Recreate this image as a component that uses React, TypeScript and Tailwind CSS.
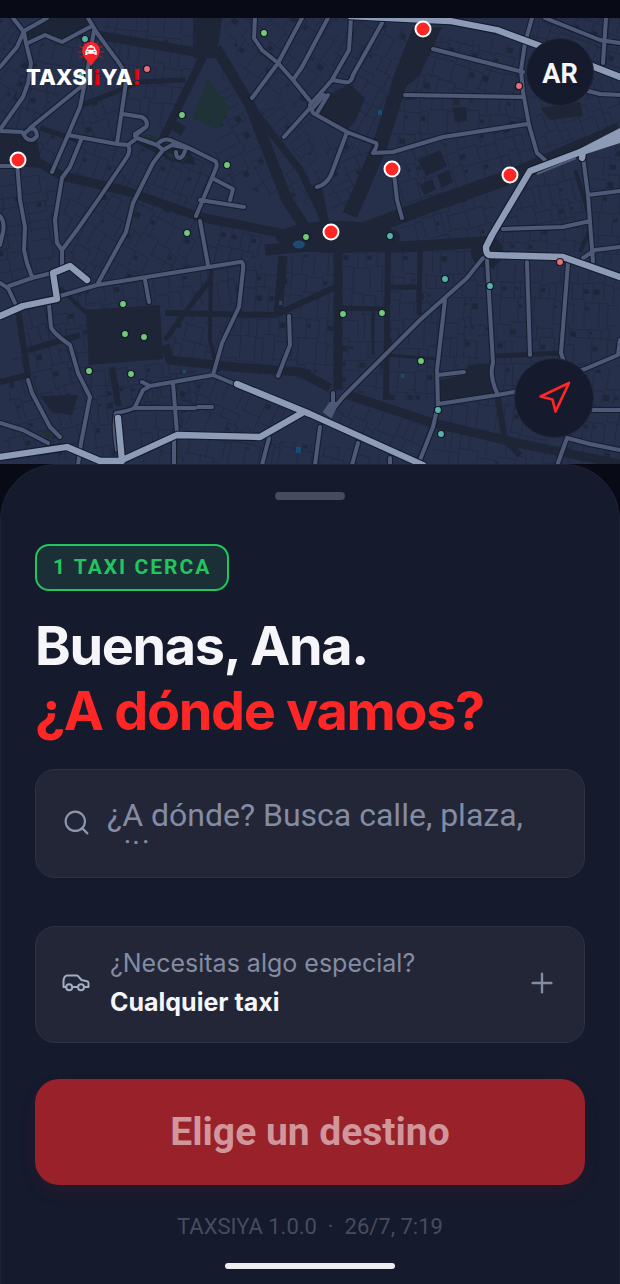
import { Navigation, Plus, Search } from "lucide-react";

type Point = [number, number];

const taxis: Point[] = [
  [423, 29],
  [18, 160],
  [392, 169],
  [510, 175],
  [331, 232],
];

const places: { color: string; points: Point[] }[] = [
  {
    color: "#74c974",
    points: [
      [264, 33], [182, 115], [227, 165], [187, 233], [306, 237], [123, 304], [125, 334],
      [144, 337], [89, 371], [131, 374], [343, 314], [382, 313], [421, 361],
    ],
  },
  {
    color: "#55b5a8",
    points: [[85, 39], [81, 76], [390, 236], [445, 279], [490, 286], [438, 410], [441, 434]],
  },
  { color: "#ea6f74", points: [[147, 69], [519, 86], [560, 262]] },
];

// Blocks of houses: outline and the direction in which their plots run
const blocks: { points: string; angle: number }[] = [
  { points: "0,18 26,30 31,63 23,97 0,130", angle: 35 },
  { points: "28,43 62,42 90,30 88,67 30,128 5,128", angle: 12 },
  { points: "97,38 207,55 167,130 123,112 126,76", angle: 8 },
  { points: "98,18 193,18 193,52 110,35", angle: 4 },
  { points: "222,18 345,18 310,110 252,98", angle: 38 },
  { points: "85,80 120,88 117,143 68,135", angle: -18 },
  { points: "40,128 68,135 52,172 38,165", angle: 22 },
  { points: "81,143 128,147 100,195 62,180", angle: 18 },
  { points: "128,147 163,152 133,200 105,192", angle: 28 },
  { points: "163,150 217,163 196,213 137,195", angle: 22 },
  { points: "222,70 285,200 212,178 218,130", angle: 62 },
  { points: "245,110 310,105 325,215 290,195", angle: 50 },
  { points: "0,168 62,180 57,240 55,270 0,285", angle: 80 },
  { points: "66,183 200,217 205,268 97,285 62,262", angle: 28 },
  { points: "204,222 262,236 260,258 208,262", angle: 12 },
  { points: "348,18 410,30 376,143 312,113", angle: 27 },
  { points: "325,135 375,148 348,215 330,210", angle: 66 },
  { points: "425,35 525,45 521,95 405,100", angle: 14 },
  { points: "400,97 525,97 527,124 383,152", angle: 3 },
  { points: "380,155 530,125 540,160 405,205", angle: -15 },
  { points: "527,75 620,80 620,128 545,158", angle: -20 },
  { points: "533,18 620,18 620,75 530,40", angle: 20 },
  { points: "360,225 500,182 486,247 370,243", angle: -14 },
  { points: "530,178 583,157 590,222 500,230", angle: -12 },
  { points: "590,153 620,145 620,270 593,255", angle: 3 },
  { points: "500,232 590,225 590,252 495,252", angle: 3 },
  { points: "60,290 243,265 239,305 85,312", angle: -9 },
  { points: "20,305 50,305 90,397 80,460 0,460", angle: -14 },
  { points: "52,310 85,312 90,368 125,372 115,460 92,455 90,395", angle: -6 },
  { points: "95,370 165,362 213,375 140,410 112,405", angle: -8 },
  { points: "165,315 237,312 213,375 165,360", angle: 15 },
  { points: "243,266 333,250 333,385 222,370", angle: 4 },
  { points: "135,390 213,378 177,433 125,455", angle: -3 },
  { points: "180,390 213,378 300,412 260,437 180,435", angle: 24 },
  { points: "130,462 177,438 265,440 350,448 400,465", angle: 12 },
  { points: "343,252 383,250 383,390 340,395", angle: 1 },
  { points: "390,250 485,250 385,360", angle: 0 },
  { points: "390,350 443,300 438,400 388,400", angle: 2 },
  { points: "447,290 487,262 493,365 440,375", angle: 4 },
  { points: "491,260 620,278 615,355 500,392", angle: 2 },
  { points: "340,400 430,425 420,465 335,420", angle: 24 },
  { points: "440,405 620,365 620,465 430,465", angle: 8 },
];

const avenues: { d: string; width: number }[] = [
  { d: "M97 35L207 54", width: 9 },
  { d: "M203 57L167 130L160 145", width: 8 },
  { d: "M216 48L250 105L287 200L310 235", width: 11 },
  { d: "M250 105L300 170L322 215", width: 7 },
  { d: "M35 160L62 176L123 190L200 217L280 233L310 236", width: 9 },
  { d: "M40 128L80 141M83 105L140 82L185 80", width: 5 },
  { d: "M350 235L425 207L515 175L620 130", width: 15 },
  { d: "M350 215L380 145L402 75L420 30", width: 15 },
  { d: "M325 225L317 185", width: 9 },
  { d: "M265 250L310 246L400 247L486 242", width: 11 },
  { d: "M338 250L338 390", width: 9 },
  { d: "M388 250L386 400", width: 6 },
  { d: "M420 250L419 315M340 308L386 309M390 287L420 287", width: 5 },
  { d: "M373 308L373 355M386 355L438 359", width: 3 },
  { d: "M283 256L278 312", width: 9 },
  { d: "M211 265L210 340L218 372", width: 4 },
  { d: "M165 313L275 315L338 286", width: 6 },
  { d: "M165 345L170 360L235 367L300 372L330 388", width: 9 },
  { d: "M165 340L187 310L210 280", width: 5 },
  { d: "M345 394L433 423L517 443L620 464", width: 9 },
  { d: "M497 394L505 440L520 455", width: 6 },
  { d: "M18 310L28 375L0 382M28 350L80 335M112 367L118 405", width: 6 },
  { d: "M495 356L560 353", width: 5 },
  { d: "M60 288L85 312L160 307", width: 4 },
  { d: "M580 252L592 225L575 170", width: 4 },
];

const streets: string[] = [
  "M13 18L24 32L26 43L31 63L28 83L23 97L1 128",
  "M47 18L24 31L17 47L0 67",
  "M28 43L45 35L62 42L90 27",
  "M88 18L97 33L113 55Q127 72 126 82L123 103L117 143",
  "M94 30L88 67L80 107L68 135L52 172",
  "M83 85L30 128M0 131L22 132L26 138Q32 143 37 136Q37 129 31 128L25 133",
  "M68 135L117 144L128 145L137 138L157 145L163 150",
  "M123 114L142 117Q149 121 146 127L135 136L137 138M146 127L135 134",
  "M157 145Q162 138 170 140L187 147L215 161Q218 163 216 168L212 178L196 216",
  "M163 150L172 145L187 148M176 152Q176 158 180 158Q183 157 185 151",
  "M212 178L233 189L230 200M200 200L244 207",
  "M81 140L70 167L62 178L55 220L57 243L62 250L77 230M62 250L62 266",
  "M128 145Q131 150 127 157L100 197L77 230",
  "M163 150L153 163L133 203L126 232L97 285",
  "M17 162L20 200L25 227L24 250L27 263L32 277M0 166L17 166",
  "M0 216Q5 222 3 232L0 245",
  "M200 221L204 243L208 265",
  "M255 18L254 38L262 50L278 63L293 80L310 101",
  "M302 18L278 63L252 98M328 18L302 67L293 80",
  "M310 108L284 137",
  "M351 18L349 50L332 80L310 105L313 113L347 132L376 143Q378 145 373 153L393 152L443 137L527 124",
  "M382 23L353 75Q351 84 344 82L332 80M328 95L317 113M324 95L313 108",
  "M347 132L331 175Q326 185 317 187",
  "M394 173L397 200L402 218",
  "M532 18L525 43L521 70L523 92L529 125L537 153L545 160",
  "M433 49L523 72M405 95L523 97",
  "M545 18L600 40L620 43M606 18L603 63M588 91L600 94L620 95",
  "M583 157L588 195L593 262M588 195L620 191M503 229L563 227L590 221",
  "M583 258L595 250L620 247",
  "M60 296L97 285L240 262Q244 261 243 270L239 307L222 343L213 375",
  "M145 280L149 302",
  "M0 283L8 288L15 303M9 286L32 278L52 273",
  "M49 305L51 327Q53 333 70 345L78 373L90 397L81 443L78 465",
  "M28 380L32 393L50 427L60 437M0 423L23 430L48 443",
  "M142 382L150 386L213 375L237 385",
  "M150 386L143 390L135 407Q133 410 116 413Q113 425 117 450",
  "M135 408L195 408M198 407L212 407M173 383L177 433M174 440L174 465",
  "M269 438L262 465M289 316L290 345L278 376",
  "M483 258L467 278L420 320L343 397L330 413M333 393L333 407",
  "M445 300L437 370L438 405L433 427L420 460M438 375L464 372",
  "M438 404L497 395L514 392L585 369L618 355L620 340",
  "M487 260L493 363Q489 375 497 393",
  "M527 262L530 355M568 263L561 353L564 362",
  "M593 410L620 410M558 463L567 438L590 444L620 450",
  "M320 427L315 465M358 443L352 465M390 458L390 465",
];

const mainRoads: string[] = [
  "M350 16L450 21L497 30L543 47L620 77",
  "M625 134L583 151L530 171L492 235L486 247Q486 255 490 255L563 257L620 277",
  "M583 152L582 158",
  "M0 316L23 306L57 299L53 273L70 266L87 280",
  "M0 457L67 447L100 461L120 461L177 435L260 437L302 413",
  "M237 384L310 414L423 465",
  "M118 418L122 461",
];

// Repeatable noise so that the plots look the same on every render
const noise = (n: number) => {
  const value = Math.sin(n * 127.1) * 43758.5453;
  return value - Math.floor(value);
};

const getPlots = (points: string, angle: number, seed: number) => {
  const corners = points.split(" ").map((pair) => pair.split(",").map(Number));
  const rad = (-angle * Math.PI) / 180;
  const turned = corners.map(([x, y]) => [
    x * Math.cos(rad) - y * Math.sin(rad),
    x * Math.sin(rad) + y * Math.cos(rad),
  ]);
  const xs = turned.map((p) => p[0]);
  const ys = turned.map((p) => p[1]);
  const right = Math.max(...xs);
  const bottom = Math.max(...ys);

  let lines = "";
  let yards = "";
  let n = seed * 1000;
  for (let y = Math.min(...ys); y < bottom; ) {
    const height = 14 + noise(n++) * 12;
    for (let x = Math.min(...xs); x < right; ) {
      const width = 6 + noise(n++) * 14;
      const shift = noise(n++) * 8 - 3;
      lines += `M${x} ${y + shift}h${width}v${height - shift}`;
      if (noise(n++) > 0.7) {
        const size = 2 + noise(n++) * 4;
        yards += `M${x + 1} ${y + 6}h${size}v${size}h-${size}z`;
      }
      x += width;
    }
    y += height;
  }
  return { lines, yards };
};

const CityMap = () => {
  return (
    <svg
      viewBox="0 18 620 446"
      preserveAspectRatio="xMidYMid slice"
      className="block h-full w-full"
      role="img"
      aria-label="Mapa"
    >
      <rect y="18" width="620" height="446" fill="#27304b" />
      {blocks.map((block, i) => {
        const { lines, yards } = getPlots(block.points, block.angle, i + 1);
        return (
          <g key={block.points}>
            <clipPath id={`block-${i}`}>
              <polygon points={block.points} />
            </clipPath>
            <g clipPath={`url(#block-${i})`}>
              <g transform={`rotate(${block.angle})`}>
                <path d={lines} fill="none" stroke="#1f283e" strokeWidth="0.7" />
                <path d={yards} fill="#1e2639" />
              </g>
            </g>
          </g>
        );
      })}

      <g fill="#1d2537">
        <polygon points="86,313 160,309 163,359 89,365" />
        <polygon points="193,18 222,18 219,40 215,58 193,58" />
        <polygon points="50,18 86,18 88,27 62,39 45,32 29,39 26,32" />
        <polygon points="0,133 37,138 42,168 0,165" />
        <polygon points="330,94 350,84 365,98 355,122 347,130 318,113" />
        <polygon points="413,30 442,27 420,75 402,90" />
        <polygon points="440,380 464,375 468,365 492,363 490,380 495,394 440,402" />
        <polygon points="132,141 150,135 163,143 190,152 196,165 175,162 150,150" />
        <polygon points="418,160 440,150 447,166 426,176" />
        <polygon points="420,185 432,179 436,189 424,195" />
        <polygon points="437,175 449,170 453,182 442,188" />
        <polygon points="540,108 580,102 583,116 550,120" />
        <polygon points="453,108 466,107 467,121 455,122" />
        <polygon points="176,121 186,127 181,136 172,130" />
        <polygon points="40,396 78,395 72,415 52,412" />
        <ellipse cx="338" cy="237" rx="62" ry="16" />
        <circle cx="487" cy="252" r="16" />
      </g>
      <g fill="none" stroke="#1d2537" strokeLinejoin="round">
        {avenues.map((avenue) => (
          <path key={avenue.d} d={avenue.d} strokeWidth={avenue.width} />
        ))}
      </g>
      <g fill="#1f3237">
        <polygon points="208,78 230,108 218,130 192,118" />
        <polygon points="144,135 163,138 158,145 147,140" />
        <polygon points="165,152 190,157 182,162 170,158" />
        <polygon points="42,432 50,428 54,436 47,441" />
      </g>
      <g fill="#1b4a74">
        <ellipse cx="299" cy="244.500" rx="6" ry="4" />
        <rect x="279" y="301" width="3" height="4" />
        <rect x="296" y="447" width="5" height="6" />
        <rect x="401" y="374" width="3" height="4" />
        <rect x="183" y="370" width="3" height="3" />
        <rect x="378" y="110" width="4" height="5" />
      </g>

      <g fill="none" strokeLinecap="round" strokeLinejoin="round">
        <path d={streets.join("")} stroke="#161e30" strokeWidth="6.200" />
        <path d={streets.join("")} stroke="#4d5976" strokeWidth="4" />
        <path d="M330 403L338 403L331 417L324 412Z" fill="#4d5976" stroke="#4d5976" strokeWidth="2" />
        <path d={mainRoads.join("")} stroke="#131b2c" strokeWidth="8.500" />
        <path d={mainRoads.join("")} stroke="#8e9bb7" strokeWidth="6.300" />
      </g>
      <polygon points="560,159 620,128 620,143 583,155" fill="#8e9bb7" />
      <path d="M537 174L576 158" stroke="#4d5976" strokeWidth="2" />

      {places.map((kind) =>
        kind.points.map(([x, y]) => (
          <circle key={`${x}-${y}`} cx={x} cy={y} r="3.500" fill={kind.color} stroke="#10182a" strokeWidth="1.200" />
        ))
      )}
      {taxis.map(([x, y]) => (
        <circle key={`${x}-${y}`} cx={x} cy={y} r="7.500" fill="#ff2626" stroke="#fff" strokeWidth="2" />
      ))}
    </svg>
  );
};

const Logo = () => {
  return (
    <div className="absolute left-[26px] top-[21px] flex flex-col items-center">
      <svg width="28" height="28" viewBox="0 0 28 28" className="ml-4" aria-hidden="true">
        <path
          d="M14 1V4M7 3L9 6M21 3L19 6M2 7L6 9M26 7L22 9M1 13H5M27 13H23M2 19L6 17M26 19L22 17"
          stroke="#c4161c"
          strokeWidth="1"
        />
        <path d="M14 27C11 22 5.200 18 5.200 11.500a8.800 8.800 0 0 1 17.600 0C22.800 18 17 22 14 27Z" fill="#f5232a" />
        <path
          d="M12.500 6h3v1.500h1.700L18.800 11l.9.900V16h-2v-1.200h-7.400V16h-2v-4.100l.9-.9 1.600-3.500h1.700Z"
          fill="#fff"
        />
        <path d="M11.600 8.700h4.800l.9 2.100h-6.600ZM9.600 12.300h2v1h-2ZM16.400 12.300h2v1h-2Z" fill="#f5232a" />
      </svg>
      <span className="-mt-1 font-[Inter,sans-serif] text-[22px] font-extrabold leading-7 text-white [font-feature-settings:'case']">
        TAXSI<span className="text-[#f00006]">¡</span>YA<span className="text-[#f00006]">!</span>
      </span>
    </div>
  );
};

const CarIcon = () => {
  return (
    <svg width="28" height="18" viewBox="0 0 28 18" fill="none" stroke="currentColor" strokeWidth="2" strokeLinecap="round" strokeLinejoin="round" aria-hidden="true">
      <path d="M4 13H1.500V8C1.500 4 3 1.500 5.500 1.500H14.500Q15.500 1.500 16.300 2.300L19.500 6L25 7.300Q26.500 7.800 26.500 9V13H22.500M10.500 13H15.500" />
      <circle cx="7.200" cy="13.300" r="3" />
      <circle cx="19" cy="13.300" r="3" />
    </svg>
  );
};

const App = () => {
  return (
    <div className="flex min-h-screen flex-col bg-[#080a15] pt-[18px] font-[Roboto,sans-serif]">
      <header className="relative h-[446px] overflow-hidden">
        <CityMap />
        <Logo />
        <button
          type="button"
          aria-label="Perfil"
          className="absolute right-[26px] top-[20px] size-[68px] rounded-full border border-[#23273a] bg-[#151a2d] pt-1 text-[27px] font-bold text-[#f5f5fa]"
        >
          AR
        </button>
        <button
          type="button"
          aria-label="Mi ubicación"
          className="absolute bottom-[26px] right-[26px] flex size-20 items-center justify-center rounded-full border border-[#23273a] bg-[#151a2d] text-[#ff2626]"
        >
          <Navigation size={36} strokeWidth={1.8} />
        </button>
      </header>

      <main className="flex flex-1 flex-col rounded-t-[56px] border border-b-0 border-[#1e2336] bg-[#151a2d] px-[34px] pt-[27px]">
        <div className="h-2 w-[70px] self-center rounded-full bg-[#474b5e]" />

        <div className="mt-11 self-start rounded-[14px] border-2 border-[#22c55e] bg-[#1a3036] px-4 py-2 text-[21px] font-bold leading-[27px] tracking-[2px] text-[#22c55e]">
          1 TAXI CERCA
        </div>

        <h1 className="mt-[22px] h-[128px] overflow-hidden font-[Inter,sans-serif] text-[54px] font-bold leading-[65px] tracking-tight text-[#f5f5fa]">
          Buenas, Ana.
          <span className="block text-[#ff2626]">¿A dónde vamos?</span>
        </h1>

        <label className="mt-7 flex items-center gap-4 rounded-[20px] border border-[#2e3243] bg-[#222637] px-[26px] pb-[33px] pt-[27px] text-[#8d96ac]">
          <Search size={29} strokeWidth={1.8} className="mt-1 shrink-0" />
          <textarea
            aria-label="Destino"
            placeholder="¿A dónde? Busca calle, plaza, sitio…"
            className="h-[47px] min-w-0 flex-1 resize-none overflow-hidden bg-transparent pr-8 text-[32px] leading-9 outline-none placeholder:text-[#848ca3]"
          />
        </label>

        <button
          type="button"
          className="mt-12 flex items-center gap-5 rounded-[20px] border border-[#2e3243] bg-[#222637] px-[26px] pb-5 pt-[17px] text-left font-[Inter,sans-serif] text-[#848ca3]"
        >
          <span className="text-[#a3adc4]">
            <CarIcon />
          </span>
          <span className="flex flex-1 flex-col text-[25px] leading-[39px]">
            <span>¿Necesitas algo especial?</span>
            <span className="font-bold text-[#f5f5fa]">Cualquier taxi</span>
          </span>
          <Plus size={32} strokeWidth={1.8} />
        </button>

        <button
          type="button"
          disabled
          className="mt-9 rounded-[24px] bg-[#99212a] py-7 text-[39px] font-bold leading-[50px] text-[#d1969b] shadow-[0_8px_20px_rgba(255,38,38,0.06)]"
        >
          Elige un destino
        </button>

        <p className="mt-7 whitespace-pre text-center text-[22px] leading-7 text-[#474c5e]">
          TAXSIYA 1.0.0  ·  26/7, 7:19
        </p>
        <div className="mb-4 mt-[22px] h-[6px] w-[170px] self-center rounded-full bg-[#ededf2]" />
      </main>
    </div>
  );
};

export default App;
